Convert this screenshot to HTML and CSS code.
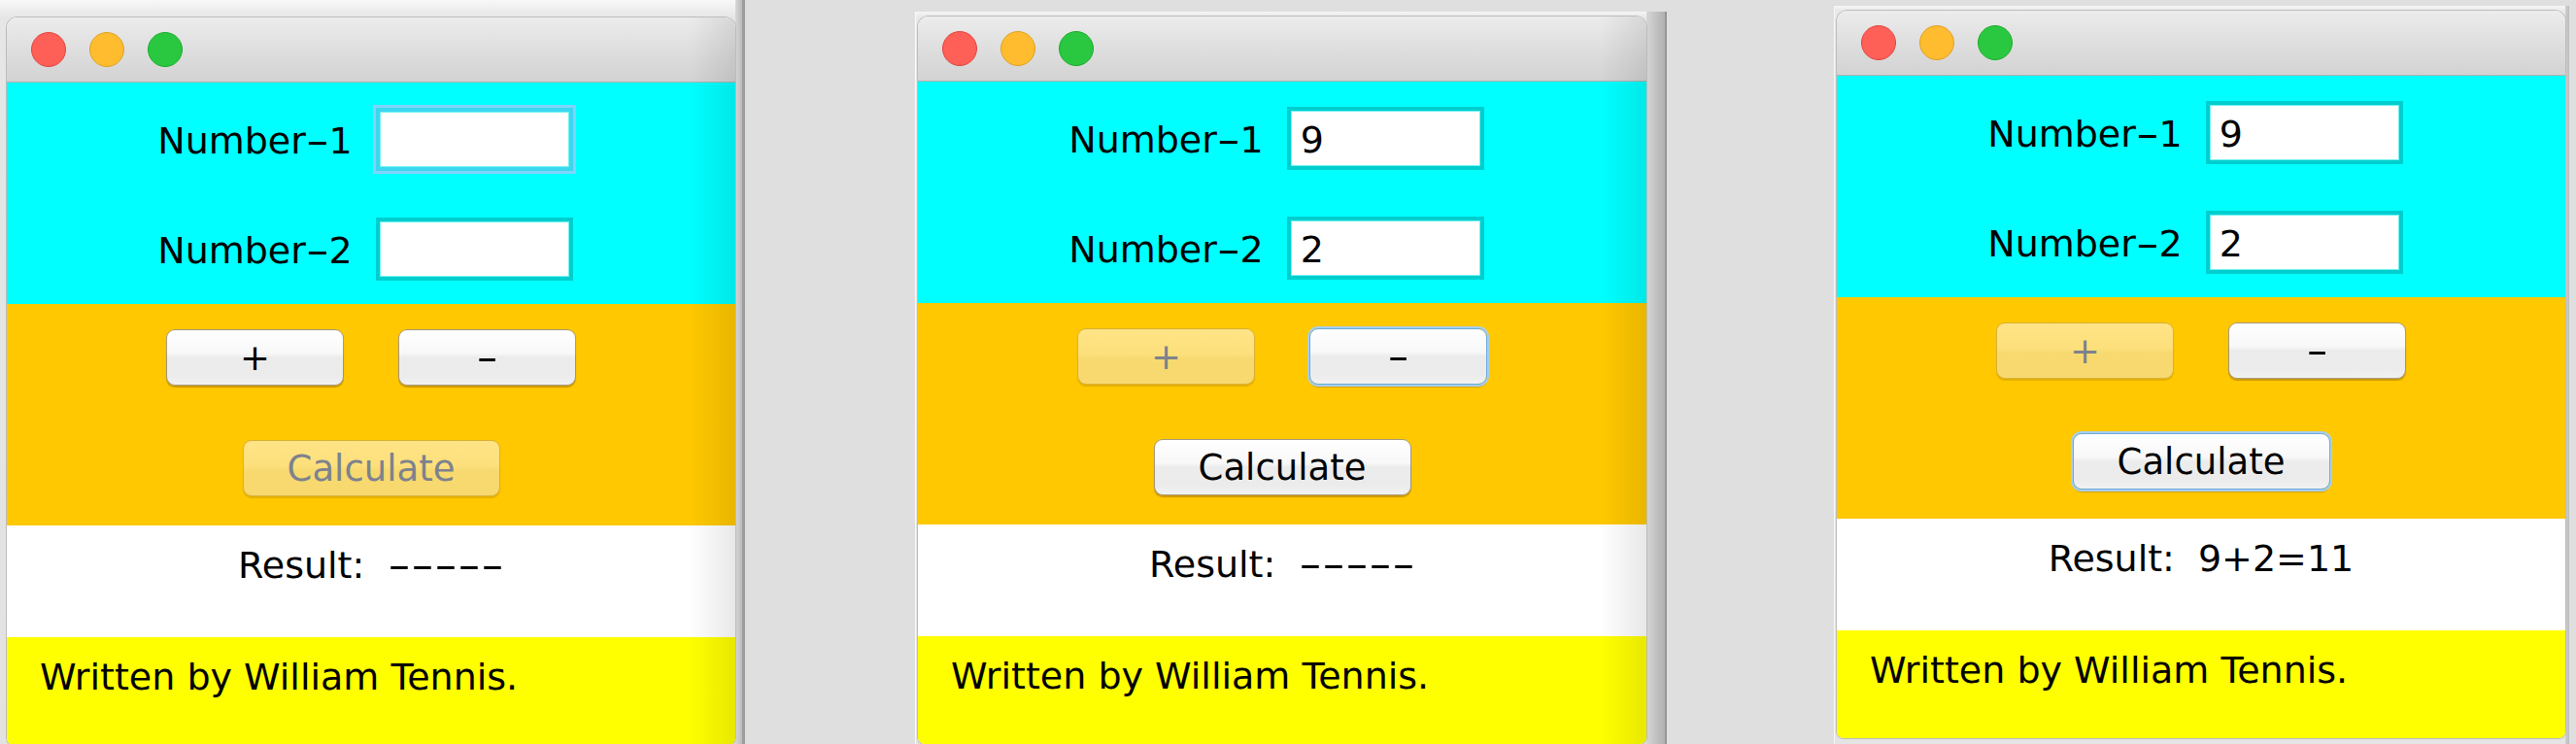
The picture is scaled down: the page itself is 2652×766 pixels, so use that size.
FILE: index.html
```html
<!DOCTYPE html>
<html lang="en">
<head>
<meta charset="utf-8">
<title>Calculator – three states</title>
<link rel="stylesheet" href="styles.css">
</head>
<body>
<div class="screen">

  <div class="shot shot-1">
    <div class="window window--shaded">
      <div class="titlebar"><span class="light red"></span><span class="light amber"></span><span class="light green"></span></div>
      <div class="inputs">
        <div class="row"><span class="label">Number<span class="hy">-</span>1</span><input class="field field--focused" value="" readonly></div>
        <div class="row"><span class="label">Number<span class="hy">-</span>2</span><input class="field" value="" readonly></div>
      </div>
      <div class="actions">
        <div class="btn-row"><button class="btn">+</button><button class="btn"><span class="hy hy--btn">-</span></button></div>
        <button class="btn btn--wide btn--disabled">Calculate</button>
      </div>
      <div class="result">Result:<span class="value dashes">-----</span></div>
      <div class="credit">Written by William Tennis.</div>
    </div>
  </div>

  <div class="shot shot-2">
    <div class="window window--shaded">
      <div class="titlebar"><span class="light red"></span><span class="light amber"></span><span class="light green"></span></div>
      <div class="inputs">
        <div class="row"><span class="label">Number<span class="hy">-</span>1</span><input class="field" value="9" readonly></div>
        <div class="row"><span class="label">Number<span class="hy">-</span>2</span><input class="field" value="2" readonly></div>
      </div>
      <div class="actions">
        <div class="btn-row"><button class="btn btn--disabled">+</button><button class="btn btn--focused"><span class="hy hy--btn">-</span></button></div>
        <button class="btn btn--wide">Calculate</button>
      </div>
      <div class="result">Result:<span class="value dashes">-----</span></div>
      <div class="credit">Written by William Tennis.</div>
    </div>
  </div>

  <div class="shot shot-3">
    <div class="window">
      <div class="titlebar"><span class="light red"></span><span class="light amber"></span><span class="light green"></span></div>
      <div class="inputs">
        <div class="row"><span class="label">Number<span class="hy">-</span>1</span><input class="field" value="9" readonly></div>
        <div class="row"><span class="label">Number<span class="hy">-</span>2</span><input class="field" value="2" readonly></div>
      </div>
      <div class="actions">
        <div class="btn-row"><button class="btn btn--disabled">+</button><button class="btn"><span class="hy hy--btn">-</span></button></div>
        <button class="btn btn--wide btn--focused">Calculate</button>
      </div>
      <div class="result">Result:<span class="value">9+2=11</span></div>
      <div class="credit">Written by William Tennis.</div>
    </div>
  </div>

</div>
</body>
</html>
```

FILE: styles.css
```css
html, body {
  margin: 0;
  padding: 0;
}

body {
  width: 2652px;
  height: 766px;
  overflow: hidden;
  background: #dfdfdf;
  font-family: "DejaVu Sans", "Liberation Sans", sans-serif;
  color: #000;
}

.screen {
  display: flex;
  align-items: flex-start;
  height: 766px;
  overflow: hidden;
  background: #dfdfdf;
}

.shot {
  display: flex;
  align-items: flex-start;
  box-sizing: border-box;
  overflow: hidden;
}

.shot-1 {
  height: 766px;
  padding: 18px 7px 0 7px;
  border-right: 3px solid #9d9d9d;
  background:
    linear-gradient(to right, rgba(0,0,0,0) calc(100% - 7px), #d8d8d8 calc(100% - 7px), #bababa),
    linear-gradient(#f8f8f8, #e6e6e6 18px, #e2e2e2);
}

.shot-2 {
  margin-left: 175px;
  margin-top: 12px;
  height: 754px;
  padding: 5px 19px 0 2px;
  border-left: 1px solid #fafafa;
  border-right: 2px solid #969696;
  background:
    linear-gradient(to right, rgba(0,0,0,0) calc(100% - 19px), #d6d6d6 calc(100% - 19px), #b0b0b0),
    linear-gradient(#f6f6f6, #e9e9e9 5px, #e4e4e4);
}

.shot-3 {
  margin-left: 172px;
  margin-top: 6px;
  height: 760px;
  padding: 5px 4px 0 2px;
  border-left: 1px solid #f6f6f6;
  background:
    linear-gradient(to right, rgba(0,0,0,0) calc(100% - 4px), #cfcfcf calc(100% - 4px), #bdbdbd),
    linear-gradient(#f6f6f6, #e9e9e9 5px, #e4e4e4);
}

.window {
  position: relative;
  width: 750px;
  display: flex;
  flex-direction: column;
  border-radius: 11px 11px 7px 7px;
  overflow: hidden;
  box-shadow: 0 0 0 1px #bcbcbc;
  background: #fff;
  flex: none;
}

.window--shaded::after {
  content: "";
  position: absolute;
  top: 0;
  right: 0;
  bottom: 0;
  width: 48px;
  background: linear-gradient(to right, rgba(0,0,0,0), rgba(0,0,0,0.09));
  pointer-events: none;
}

.titlebar {
  height: 67px;
  box-sizing: border-box;
  display: flex;
  align-items: center;
  gap: 24px;
  padding-left: 25px;
  background: linear-gradient(#ececec, #dcdcdc 60%, #d3d3d3);
  border-bottom: 1px solid #b2b2b2;
}

.light {
  width: 36px;
  height: 36px;
  box-sizing: border-box;
  border-radius: 50%;
  border: 1px solid;
}

.red { background: #fe5f57; border-color: #e0443e; }
.amber { background: #febc2e; border-color: #dea123; }
.green { background: #2ac840; border-color: #1aab29; }

.inputs {
  height: 228px;
  box-sizing: border-box;
  padding: 26px 12px 0 0;
  display: flex;
  flex-direction: column;
  gap: 48px;
  background: #00ffff;
}

.row {
  display: flex;
  justify-content: center;
  align-items: center;
  gap: 24px;
}

.label {
  font-size: 38px;
  line-height: 44px;
  padding-top: 3px;
  white-space: nowrap;
}

.hy {
  display: inline-block;
  transform: scaleX(1.8);
  margin: 0 5px;
}

.hy--btn {
  transform: scaleX(1.7);
  margin: 0;
}

.field {
  width: 203px;
  height: 65px;
  box-sizing: border-box;
  margin: 0;
  padding: 2px 0 0 10px;
  border: 4px solid #00cece;
  box-shadow: inset 0 0 0 1px #6ff2f2;
  background: #fff;
  font-family: "DejaVu Sans", "Liberation Sans", sans-serif;
  font-size: 38px;
  color: #000;
  outline: none;
}

.field--focused {
  border-color: #3ad8ef;
  box-shadow: 0 0 0 3px #80d4fb, inset 0 0 0 1px #6ff2f2;
}

.actions {
  height: 228px;
  box-sizing: border-box;
  padding-top: 26px;
  display: flex;
  flex-direction: column;
  align-items: center;
  gap: 56px;
  background: #ffc800;
}

.btn-row {
  display: flex;
  gap: 56px;
}

.btn {
  width: 183px;
  height: 58px;
  box-sizing: border-box;
  margin: 0;
  padding: 0;
  font-family: "DejaVu Sans", "Liberation Sans", sans-serif;
  font-size: 37px;
  line-height: 1;
  color: #000;
  border: 1px solid rgba(90, 60, 0, 0.5);
  border-radius: 9px;
  background: linear-gradient(#ffffff 0%, #f8f8f8 42%, #ececec 50%, #ebebeb 82%, #f2f2f2 100%);
  box-shadow: 0 2px 1px rgba(140, 95, 0, 0.45);
}

.btn--wide {
  width: 265px;
}

.btn--disabled {
  color: #7d828d;
  border-color: rgba(190, 140, 0, 0.55);
  background: linear-gradient(#ffe486 0%, #fde07c 45%, #f7d970 55%, #f7d96f 100%);
  box-shadow: 0 2px 1px rgba(170, 120, 0, 0.3);
}

.btn--focused {
  border-color: #6fa9d8;
  box-shadow: 0 0 0 2px #a6d0ef, 0 3px 1px rgba(140, 95, 0, 0.35);
}

.result {
  height: 115px;
  box-sizing: border-box;
  padding-top: 19px;
  text-align: center;
  font-size: 38px;
  line-height: 44px;
  background: #fff;
}

.value {
  margin-left: 24px;
}

.dashes {
  display: inline-block;
  transform: scaleX(1.75);
  transform-origin: left center;
  margin-right: 51px;
}

.credit {
  height: 111px;
  box-sizing: border-box;
  padding: 19px 0 0 34px;
  font-size: 38px;
  line-height: 44px;
  background: #ffff00;
}
```
